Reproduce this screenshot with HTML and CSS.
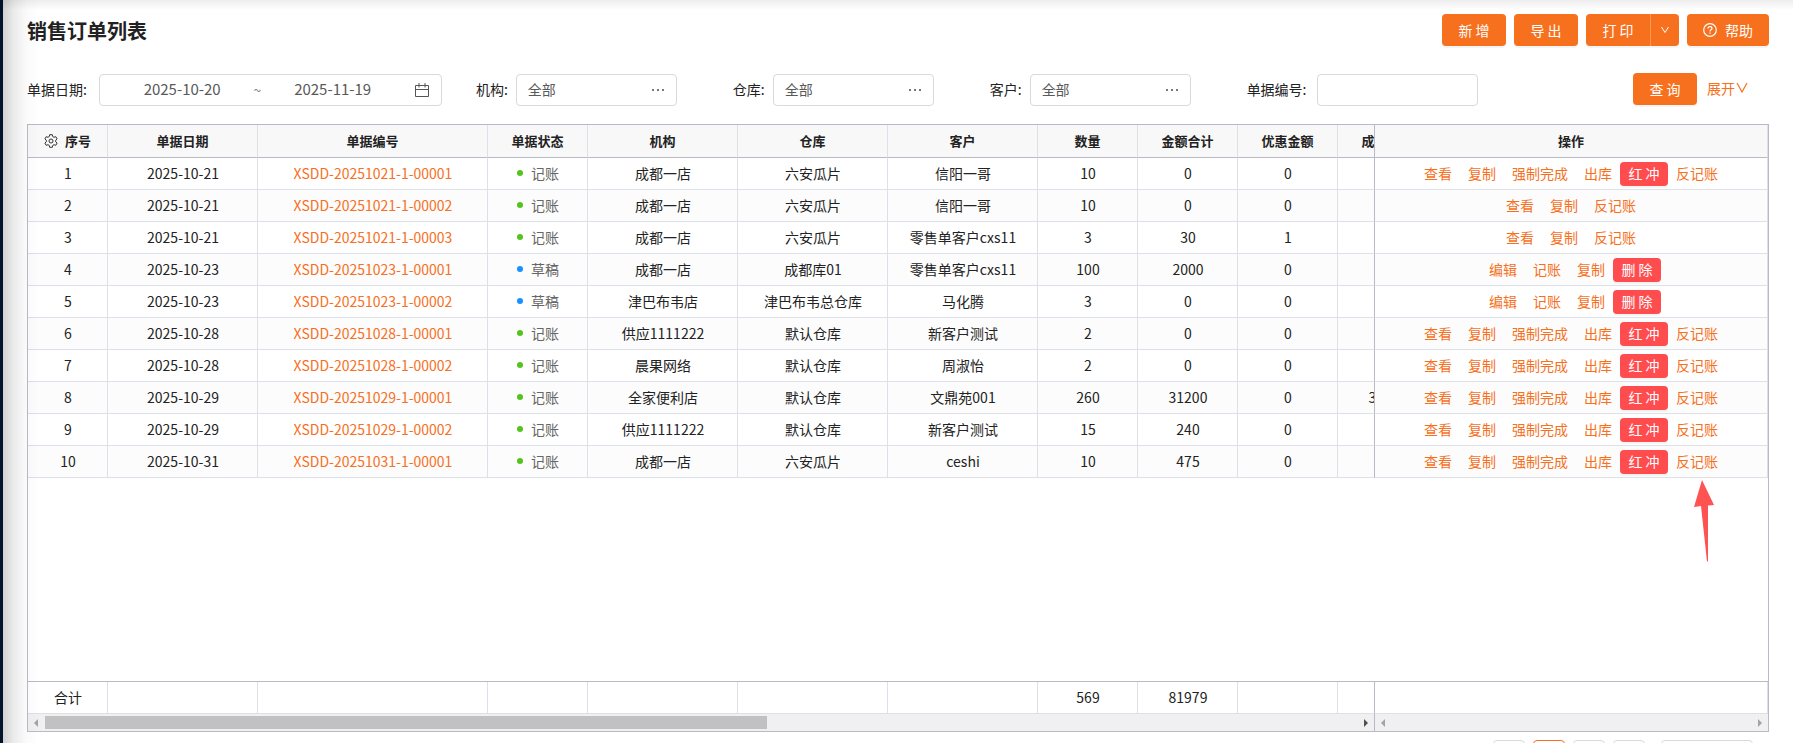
FILE: index.html
```html
<!DOCTYPE html>
<html lang="zh-CN">
<head>
    <meta charset="UTF-8">
    <meta name="viewport" content="width=device-width, initial-scale=1.0">
    <title>销售订单列表</title>
    <link rel="stylesheet" href="styles.css">
</head>
<body>
    <aside class="sidebar"></aside>

    <main class="page">
        <header class="page-header">
            <h1>销售订单列表</h1>
            <div class="toolbar">
                <button type="button" class="btn">新 增</button>
                <button type="button" class="btn">导 出</button>
                <div class="btn-group">
                    <button type="button" class="btn">打 印</button>
                    <button type="button" class="btn btn-arrow" aria-label="更多打印选项">
                        <svg width="10" height="10" viewBox="0 0 10 10"><path d="M1.500 2L5 7.500 8.500 2" fill="none" stroke="#fff"/></svg>
                    </button>
                </div>
                <button type="button" class="btn btn-help">
                    <svg width="14" height="14" viewBox="0 0 14 14" fill="none" stroke="#fff" stroke-width="1.2">
                        <circle cx="7" cy="7" r="6.3"/>
                        <path d="M5 5.6c0-1.2.9-1.9 2-1.9s2 .7 2 1.8c0 1.3-2 1.4-2 2.9"/>
                        <path d="M7 9.5v1.2"/>
                    </svg>
                    帮助
                </button>
            </div>
        </header>

        <!-- Filtres de recherche -->
        <form class="filters">
            <div class="field">
                <label for="date-start">单据日期:</label>
                <div class="range">
                    <input type="text" id="date-start" value="2025-10-20">
                    <span>~</span>
                    <input type="text" id="date-end" value="2025-11-19" aria-label="结束日期">
                    <svg width="14" height="14" viewBox="0 0 14 14" fill="none" stroke="#555">
                        <path d="M.5 2.5h13v11H.5zM.5 6.5h13M4 0v4.500M10 0v4.500"/>
                    </svg>
                </div>
            </div>
            <div class="field">
                <label for="org">机构:</label>
                <div class="picker">
                    <input type="text" id="org" value="全部">
                    <button type="button" aria-label="选择机构"><svg width="14" height="14" viewBox="0 0 14 14" fill="#777"><path d="M1 6h2v2H1zM6 6h2v2H6zM11 6h2v2h-2z"/></svg></button>
                </div>
            </div>
            <div class="field">
                <label for="store">仓库:</label>
                <div class="picker">
                    <input type="text" id="store" value="全部">
                    <button type="button" aria-label="选择仓库"><svg width="14" height="14" viewBox="0 0 14 14" fill="#777"><path d="M1 6h2v2H1zM6 6h2v2H6zM11 6h2v2h-2z"/></svg></button>
                </div>
            </div>
            <div class="field">
                <label for="client">客户:</label>
                <div class="picker">
                    <input type="text" id="client" value="全部">
                    <button type="button" aria-label="选择客户"><svg width="14" height="14" viewBox="0 0 14 14" fill="#777"><path d="M1 6h2v2H1zM6 6h2v2H6zM11 6h2v2h-2z"/></svg></button>
                </div>
            </div>
            <div class="field">
                <label for="number">单据编号:</label>
                <div class="picker"><input type="text" id="number"></div>
            </div>
            <div class="filter-actions">
                <button type="button" class="btn">查 询</button>
                <a href="#" class="expand">展开<svg width="12" height="12" viewBox="0 0 12 12"><path d="M1 1l5 9 5-9" fill="none" stroke="#f7701d" stroke-width="1.2"/></svg></a>
            </div>
        </form>

        <div class="grid">
            <div class="pane pane-main">
                <table>
                    <colgroup><col class="w80"><col class="w150"><col class="w230"><col class="w100"><col class="w150"><col class="w150"><col class="w150"><col class="w100"><col class="w100"><col class="w100"><col class="w100"></colgroup>
                    <thead>
                        <tr>
                            <th>
                                <div class="index-head">
                                    <svg width="14" height="14" viewBox="0 0 14 14" fill="none" stroke="#333">
                                        <path d="M5.700.7h2.600l.4 1.800 1.300.8 1.800-.6 1.300 2.200-1.400 1.300v1.600l1.400 1.300-1.300 2.200-1.800-.6-1.300.8-.4 1.800H5.700l-.4-1.800-1.300-.8-1.800.6L.9 9.100l1.400-1.300V6.200L.9 4.900l1.300-2.200 1.800.6 1.300-.8z"/>
                                        <circle cx="7" cy="7" r="2"/>
                                    </svg>
                                    序号
                                </div>
                            </th>
                            <th>单据日期</th><th>单据编号</th><th>单据状态</th><th>机构</th><th>仓库</th><th>客户</th><th>数量</th><th>金额合计</th><th>优惠金额</th><th>成本金额</th>
                        </tr>
                    </thead>
                    <tbody>
                        <tr><td>1</td><td>2025-10-21</td><td><a href="#">XSDD-20251021-1-00001</a></td><td><span class="status">记账</span></td><td>成都一店</td><td>六安瓜片</td><td>信阳一哥</td><td>10</td><td>0</td><td>0</td><td></td></tr>
                        <tr><td>2</td><td>2025-10-21</td><td><a href="#">XSDD-20251021-1-00002</a></td><td><span class="status">记账</span></td><td>成都一店</td><td>六安瓜片</td><td>信阳一哥</td><td>10</td><td>0</td><td>0</td><td></td></tr>
                        <tr><td>3</td><td>2025-10-21</td><td><a href="#">XSDD-20251021-1-00003</a></td><td><span class="status">记账</span></td><td>成都一店</td><td>六安瓜片</td><td>零售单客户cxs11</td><td>3</td><td>30</td><td>1</td><td></td></tr>
                        <tr><td>4</td><td>2025-10-23</td><td><a href="#">XSDD-20251023-1-00001</a></td><td><span class="status draft">草稿</span></td><td>成都一店</td><td>成都库01</td><td>零售单客户cxs11</td><td>100</td><td>2000</td><td>0</td><td></td></tr>
                        <tr><td>5</td><td>2025-10-23</td><td><a href="#">XSDD-20251023-1-00002</a></td><td><span class="status draft">草稿</span></td><td>津巴布韦店</td><td>津巴布韦总仓库</td><td>马化腾</td><td>3</td><td>0</td><td>0</td><td></td></tr>
                        <tr><td>6</td><td>2025-10-28</td><td><a href="#">XSDD-20251028-1-00001</a></td><td><span class="status">记账</span></td><td>供应1111222</td><td>默认仓库</td><td>新客户测试</td><td>2</td><td>0</td><td>0</td><td></td></tr>
                        <tr><td>7</td><td>2025-10-28</td><td><a href="#">XSDD-20251028-1-00002</a></td><td><span class="status">记账</span></td><td>晨果网络</td><td>默认仓库</td><td>周淑怡</td><td>2</td><td>0</td><td>0</td><td></td></tr>
                        <tr><td>8</td><td>2025-10-29</td><td><a href="#">XSDD-20251029-1-00001</a></td><td><span class="status">记账</span></td><td>全家便利店</td><td>默认仓库</td><td>文鼎苑001</td><td>260</td><td>31200</td><td>0</td><td>31200</td></tr>
                        <tr><td>9</td><td>2025-10-29</td><td><a href="#">XSDD-20251029-1-00002</a></td><td><span class="status">记账</span></td><td>供应1111222</td><td>默认仓库</td><td>新客户测试</td><td>15</td><td>240</td><td>0</td><td></td></tr>
                        <tr><td>10</td><td>2025-10-31</td><td><a href="#">XSDD-20251031-1-00001</a></td><td><span class="status">记账</span></td><td>成都一店</td><td>六安瓜片</td><td>ceshi</td><td>10</td><td>475</td><td>0</td><td></td></tr>
                    </tbody>
                </table>
                <table class="summary">
                    <colgroup><col class="w80"><col class="w150"><col class="w230"><col class="w100"><col class="w150"><col class="w150"><col class="w150"><col class="w100"><col class="w100"><col class="w100"><col class="w100"></colgroup>
                    <tbody>
                        <tr><td>合计</td><td></td><td></td><td></td><td></td><td></td><td></td><td>569</td><td>81979</td><td></td><td></td></tr>
                    </tbody>
                </table>
                <div class="scrollbar">
                    <i class="arrow-left"></i>
                    <div class="track"><div class="thumb"></div></div>
                    <i class="arrow-right active"></i>
                </div>
            </div>

            <div class="pane pane-fixed">
                <table>
                    <thead>
                        <tr><th>操作</th></tr>
                    </thead>
                    <tbody>
                        <tr><td><div class="ops"><a href="#">查看</a><a href="#">复制</a><a href="#">强制完成</a><a href="#">出库</a><button type="button">红 冲</button><a href="#">反记账</a></div></td></tr>
                        <tr><td><div class="ops"><a href="#">查看</a><a href="#">复制</a><a href="#">反记账</a></div></td></tr>
                        <tr><td><div class="ops"><a href="#">查看</a><a href="#">复制</a><a href="#">反记账</a></div></td></tr>
                        <tr><td><div class="ops"><a href="#">编辑</a><a href="#">记账</a><a href="#">复制</a><button type="button">删 除</button></div></td></tr>
                        <tr><td><div class="ops"><a href="#">编辑</a><a href="#">记账</a><a href="#">复制</a><button type="button">删 除</button></div></td></tr>
                        <tr><td><div class="ops"><a href="#">查看</a><a href="#">复制</a><a href="#">强制完成</a><a href="#">出库</a><button type="button">红 冲</button><a href="#">反记账</a></div></td></tr>
                        <tr><td><div class="ops"><a href="#">查看</a><a href="#">复制</a><a href="#">强制完成</a><a href="#">出库</a><button type="button">红 冲</button><a href="#">反记账</a></div></td></tr>
                        <tr><td><div class="ops"><a href="#">查看</a><a href="#">复制</a><a href="#">强制完成</a><a href="#">出库</a><button type="button">红 冲</button><a href="#">反记账</a></div></td></tr>
                        <tr><td><div class="ops"><a href="#">查看</a><a href="#">复制</a><a href="#">强制完成</a><a href="#">出库</a><button type="button">红 冲</button><a href="#">反记账</a></div></td></tr>
                        <tr><td><div class="ops"><a href="#">查看</a><a href="#">复制</a><a href="#">强制完成</a><a href="#">出库</a><button type="button">红 冲</button><a href="#">反记账</a></div></td></tr>
                    </tbody>
                </table>
                <table class="summary">
                    <tbody>
                        <tr><td></td></tr>
                    </tbody>
                </table>
                <div class="scrollbar">
                    <i class="arrow-left"></i>
                    <div class="track"></div>
                    <i class="arrow-right"></i>
                </div>
            </div>

            <svg class="pointer" width="21" height="82" viewBox="0 0 21 82"><path d="M8 0l12 25-6 .5V81.500h-1L7 26l-7 1z" fill="#ff5252"/></svg>
        </div>

        <nav class="pagination">
            <button type="button" aria-label="上一页"></button>
            <button type="button" class="current" aria-label="第一页"></button>
            <button type="button" aria-label="第二页"></button>
            <button type="button" aria-label="下一页"></button>
            <select aria-label="每页条数"></select>
        </nav>
    </main>
</body>
</html>
```

FILE: styles.css
```css
* {
    box-sizing: border-box;
}

body {
    margin: 0;
    height: 100vh;
    display: flex;
    overflow: hidden;
    font-family: "Noto Sans CJK SC", sans-serif;
    font-size: 14px;
    line-height: 20px;
    color: #222;
    background-color: #fff;
}

a {
    color: #f7701d;
    text-decoration: none;
}

button,
input,
select {
    font: inherit;
    color: inherit;
}

svg {
    display: block;
    flex: none;
}

.sidebar {
    position: relative;
    z-index: 2;
    flex: none;
    width: 3px;
    background-color: #001529;
}

/* ombre portée du menu sur la page */
.sidebar::after {
    content: "";
    position: absolute;
    top: 0;
    bottom: 0;
    left: 100%;
    width: 36px;
    background: linear-gradient(to right, rgba(0, 0, 0, 0.18), rgba(0, 0, 0, 0.08) 30%, rgba(0, 0, 0, 0.02) 65%, transparent);
    pointer-events: none;
}

.page {
    flex: 1;
    min-width: 0;
    display: flex;
    flex-direction: column;
    padding: 14px 24px 0;
    background: linear-gradient(to bottom, #ededed, #fff 10px);
}

/* en-tête */
.page-header {
    display: flex;
    justify-content: space-between;
    align-items: center;
    height: 32px;
}

.page-header h1 {
    margin: 0;
    padding-top: 2px;
    font-size: 20px;
    font-weight: bold;
}

.toolbar {
    display: flex;
    gap: 8px;
}

.btn {
    min-width: 64px;
    height: 32px;
    padding: 0 12px;
    border: none;
    border-radius: 4px;
    color: #fff;
    background-color: #f7701d;
    box-shadow: 0 2px 0 rgba(0, 0, 0, 0.04);
    cursor: pointer;
}

.btn-group {
    display: flex;
}

.btn-group .btn {
    border-radius: 4px 0 0 4px;
}

.btn-group .btn-arrow {
    min-width: 0;
    width: 29px;
    padding: 0 9px;
    border-left: 1px solid #ff9a4d;
    border-radius: 0 4px 4px 0;
}

.btn-help {
    display: flex;
    align-items: center;
    gap: 8px;
    padding: 0 16px;
}

/* filtres */
.filters {
    display: flex;
    align-items: center;
    gap: 56px;
    height: 32px;
    margin: 28px 0 18px;
}

.field {
    display: flex;
    align-items: center;
}

.field:first-child {
    margin-right: -22px;
}

.field label {
    white-space: nowrap;
    padding: 0 8px 2px 0;
}

.field:first-child label {
    padding-right: 12px;
}

.field:nth-child(5) label {
    padding-right: 10px;
}

.range,
.picker {
    display: flex;
    align-items: center;
    height: 32px;
    border: 1px solid #d9d9d9;
    border-radius: 4px;
    color: #595959;
}

.range {
    width: 343px;
    padding: 0 12px;
    font-size: 15px;
}

.range input {
    flex: 1;
    min-width: 0;
    text-align: center;
}

.range span {
    width: 10px;
    font-size: 14px;
    color: #888;
    text-align: center;
}

.range svg {
    margin-left: 12px;
}

.range input,
.picker input {
    padding: 0 0 2px;
    border: none;
    outline: none;
    background: none;
}

.picker {
    width: 161px;
    padding: 0 11px;
}

.picker input {
    flex: 1;
    min-width: 0;
}

.picker button {
    padding: 0;
    border: none;
    background: none;
}

.filter-actions {
    display: flex;
    align-items: center;
    gap: 10px;
    margin-left: auto;
    padding: 0 21px 2px 0;
}

.expand {
    display: flex;
    align-items: center;
    gap: 1px;
    padding-bottom: 2px;
    white-space: nowrap;
}

/* tableau */
.grid {
    position: relative;
    flex: 1;
    display: flex;
    margin-bottom: 8px;
    border: 1px solid #b9bac6;
}

.pane {
    display: flex;
    flex-direction: column;
    overflow: hidden;
}

.pane-main {
    flex: 1;
    min-width: 0;
}

.pane-fixed {
    flex: none;
    width: 394px;
}

table {
    table-layout: fixed;
    border-collapse: separate;
    border-spacing: 0;
    width: 100%;
}

.pane-main table {
    width: 1410px;
}

.w80 {
    width: 80px;
}

.w100 {
    width: 100px;
}

.w150 {
    width: 150px;
}

.w230 {
    width: 230px;
}

th,
td {
    height: 32px;
    padding: 0;
    border-right: 1px solid #dddfe9;
    border-bottom: 1px solid #dddfe9;
    text-align: center;
    white-space: nowrap;
}

.pane-main td {
    padding: 0 0 2px 1px;
}

th {
    height: 33px;
    font-size: 13px;
    font-weight: bold;
    background-color: #f8f8f8;
    border-bottom-color: #b9bac6;
}

tbody tr:nth-child(even) td {
    background-color: #fcfcfc;
}

.pane-fixed th,
.pane-fixed td {
    border-left: 1px solid #b9bac6;
}

.index-head {
    display: flex;
    align-items: center;
    justify-content: center;
    gap: 7px;
}

.status {
    display: flex;
    align-items: center;
    justify-content: center;
    gap: 8px;
    color: #666;
}

.status::before {
    content: "";
    width: 6px;
    height: 6px;
    border-radius: 50%;
    background-color: #52c41a;
}

.status.draft::before {
    background-color: #1890ff;
}

.ops {
    display: flex;
    align-items: center;
    justify-content: center;
    height: 24px;
}

.ops a {
    padding: 0 8px 2px;
}

.ops button {
    width: 48px;
    height: 24px;
    padding: 0 0 1px;
    border: none;
    border-radius: 4px;
    color: #fff;
    background-color: #ff4d4f;
    box-shadow: 0 2px 0 rgba(0, 0, 0, 0.04);
    cursor: pointer;
}

.summary {
    margin-top: auto;
    border-top: 1px solid #b9bac6;
}

/* barre de défilement */
.scrollbar {
    display: flex;
    align-items: center;
    height: 17px;
    padding: 0 6px;
    background-color: #f0f0f0;
}

.pane-fixed .scrollbar {
    border-left: 1px solid #b9bac6;
}

.track {
    flex: 1;
    margin: 0 7px;
}

.thumb {
    width: 55%;
    height: 13px;
    background-color: #c1c1c1;
}

.arrow-left,
.arrow-right {
    border: 4px solid transparent;
}

.arrow-left {
    border-left: none;
    border-right-color: #a3a3a3;
}

.arrow-right {
    border-right: none;
    border-left-color: #a3a3a3;
}

.arrow-right.active {
    border-left-color: #505050;
}

.pointer {
    position: absolute;
    top: 355px;
    right: 53px;
}

/* pagination */
.pagination {
    display: flex;
    justify-content: flex-end;
    gap: 8px;
    height: 3px;
    padding-right: 16px;
}

.pagination button,
.pagination select {
    flex: none;
    width: 32px;
    height: 32px;
    border: 1px solid #d9d9d9;
    border-radius: 4px;
    background-color: #fff;
}

.pagination .current {
    border-color: #f7701d;
}

.pagination select {
    width: 92px;
    margin-left: 8px;
}
```
